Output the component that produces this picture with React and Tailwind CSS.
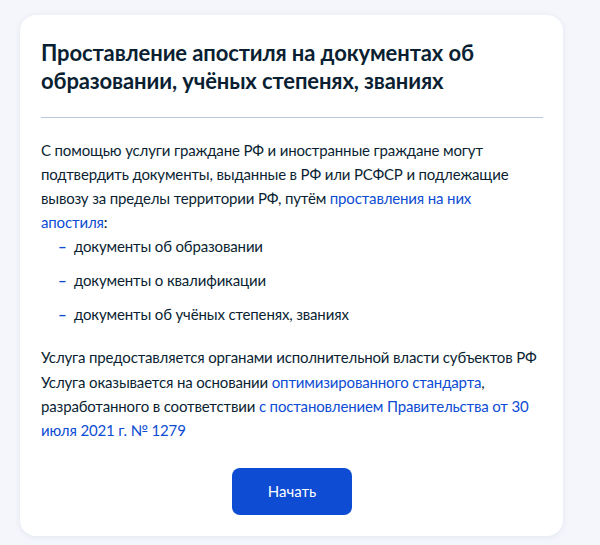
export default function App() {
  return (
    <div className="min-h-[545px] w-[600px] bg-[#f4f6fb] pt-[15px] pl-[20px]" style={{ fontFamily: 'Lato, "Noto Sans", sans-serif' }}>
      <div className="w-[543px] rounded-[16px] bg-white pl-[21px] pr-[20px] pt-[24px] pb-[21px] shadow-[0_1px_6px_rgba(30,50,100,0.08)] text-[#0b1f33]">
        <h1 className="text-[22px] leading-[28px] font-bold tracking-[-0.12px]">
          Проставление апостиля на документах об образовании, учёных степенях, званиях
        </h1>
        <div className="mt-[22px] h-px bg-[#b8c7de]" />
        <div className="tracking-[-0.15px] text-[15px] leading-[24px]">
          <p className="mt-[20px] max-w-[490px]">
            С помощью услуги граждане РФ и иностранные граждане могут подтвердить документы, выданные в РФ или РСФСР и подлежащие вывозу за пределы территории РФ, путём{' '}
            <span className="text-[#0d4cd3]">проставления на них апостиля</span>:
          </p>
          <ul className="flex flex-col gap-[10px]">
            <li className="flex pl-[17px]"><span className="w-[16px] font-bold text-[#0d4cd3]">–</span>документы об образовании</li>
            <li className="flex pl-[17px]"><span className="w-[16px] font-bold text-[#0d4cd3]">–</span>документы о квалификации</li>
            <li className="flex pl-[17px]"><span className="w-[16px] font-bold text-[#0d4cd3]">–</span>документы об учёных степенях, званиях</li>
          </ul>
          <p className="mt-[19px]">
            Услуга предоставляется органами исполнительной власти субъектов РФ
          </p>
          <p className="mt-[1px]">
            Услуга оказывается на основании <span className="text-[#0d4cd3]">оптимизированного стандарта</span>, разработанного в соответствии <span className="text-[#0d4cd3]">с постановлением Правительства от 30 июля 2021 г. № 1279</span>
          </p>
        </div>
        <div className="mt-[26px] flex justify-center">
          <button className="h-[47px] w-[120px] rounded-[8px] bg-[#0d4cd3] text-[15px] text-white">Начать</button>
        </div>
      </div>
    </div>
  );
}
